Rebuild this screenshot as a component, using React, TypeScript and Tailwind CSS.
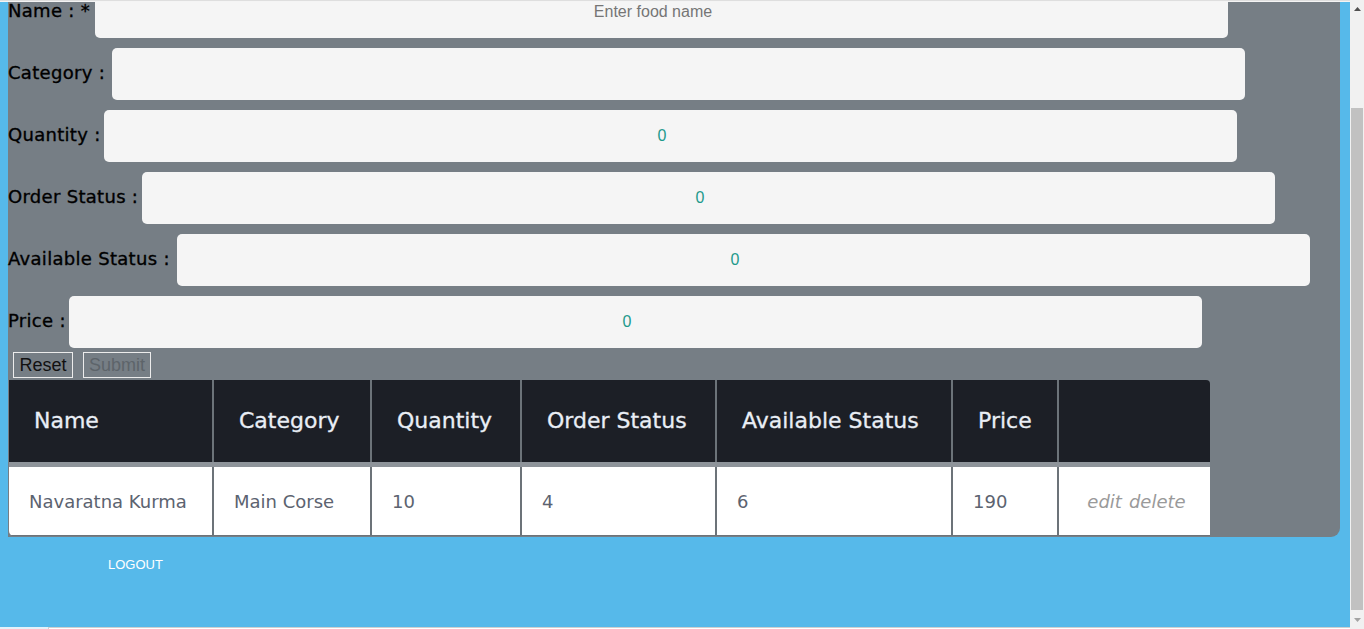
import React from "react";

const poppins = { fontFamily: '"DejaVu Sans", "Noto Sans", sans-serif' };

function FieldRow({ label, labelClass, placeholder, value }: { label: string; labelClass: string; placeholder?: string; value?: string }) {
  return (
    <div className="flex items-center">
      <span className={`${labelClass} shrink-0 text-[18px] leading-none text-black whitespace-nowrap -mt-[2px] tracking-[0.3px] [-webkit-text-stroke:0.35px_black]`} style={poppins}>
        {label}
      </span>
      <input
        readOnly
        placeholder={placeholder}
        value={value ?? ""}
        className="h-[52px] w-[1133px] shrink-0 rounded-[5px] bg-[#f5f5f5] pr-[17px] text-center text-[16px] text-[#1e9a8c] placeholder:text-[#757575] outline-none font-['Liberation_Sans',Arial,sans-serif]"
      />
    </div>
  );
}

const headers = ["Name", "Category", "Quantity", "Order Status", "Available Status", "Price", ""];
const cells = ["Navaratna Kurma", "Main Corse", "10", "4", "6", "190"];

export default function App() {
  return (
    <div className="flex h-[629px] w-[1364px] overflow-hidden bg-[#56b9ea]">
      <div className="flex min-w-0 flex-1 flex-col">
        <div className="h-[2px] shrink-0 border-t border-[#dedede] bg-[#f4f4f4]" />
        <div className="flex min-h-0 flex-1 flex-col overflow-hidden">
          <div className="-mt-[16px] ml-[8px] w-[1332px] shrink-0 rounded-br-[9px] bg-[#767e85] pb-[1px]">
            <div className="flex flex-col gap-[10px]">
              <FieldRow label="Name : *" labelClass="w-[87px]" placeholder="Enter food name" />
              <FieldRow label="Category :" labelClass="w-[104px]" />
              <FieldRow label="Quantity :" labelClass="w-[96px]" value="0" />
              <FieldRow label="Order Status :" labelClass="w-[134px]" value="0" />
              <FieldRow label="Available Status :" labelClass="w-[169px]" value="0" />
              <FieldRow label="Price :" labelClass="w-[61px]" value="0" />
            </div>
            <div className="mt-[4px] flex gap-[10px] pl-[5px] font-['Liberation_Sans',Arial,sans-serif]">
              <button className="h-[26px] w-[60px] border border-[#ececec] text-[18px] leading-none text-[#111]">Reset</button>
              <button disabled className="h-[26px] w-[68px] border border-[#ececec] text-[18px] leading-none text-[#5d646a]">Submit</button>
            </div>
            <div
              className="ml-[1px] mt-[2px] grid w-[1201px] grid-cols-[203px_156px_148px_193px_234px_104px_151px] grid-rows-[82px_5px_68px_1px] gap-x-[2px] overflow-hidden rounded-tr-[4px] rounded-bl-[5px] bg-[#6c7379]"
              style={poppins}
            >
              {headers.map((h, i) => (
                <div key={"h" + i} className="flex items-center bg-[#1c1f26] pb-[2px] pl-[25px] text-[22px] text-[#e9eef5] [-webkit-text-stroke:0.3px_#e9eef5]">
                  {h}
                </div>
              ))}
              <div className="col-span-7 bg-[#8e949a]" />
              {cells.map((c, i) => (
                <div key={"c" + i} className="flex items-center bg-white pl-[20px] text-[18px] text-[#5c6370]">
                  {c}
                </div>
              ))}
              <div className="flex items-center justify-center gap-[1px] bg-white pl-[4px] text-[18px] italic text-[#9a9a9a]">
                <span>edit</span>
                <span className="ml-[6px]">delete</span>
              </div>
              <div className="col-span-7 bg-[#6c7379]" />
            </div>
          </div>
          <div className="pl-[108px] pt-[18px] text-[13px] text-white font-['Liberation_Sans',Arial,sans-serif]">LOGOUT</div>
        </div>
        <div className="flex h-[2px] shrink-0">
          <div className="w-[48px] bg-[#e4f2fa]" />
          <div className="flex-1 border-l border-t border-[#cfcfcf] bg-white" />
        </div>
      </div>
      <div className="flex w-[14px] shrink-0 flex-col bg-[#f1f1f1]">
        <div className="flex h-[17px] items-center justify-center">
          <svg width="7" height="4" viewBox="0 0 7 4"><path d="M0 4 L3.5 0 L7 4 Z" fill="#505050" /></svg>
        </div>
        <div className="ml-[1px] mt-[91px] h-[502px] w-[12px] bg-[#c1c1c1]" />
        <div className="flex flex-1 items-center justify-center">
          <svg width="7" height="4" viewBox="0 0 7 4"><path d="M0 0 L3.5 4 L7 0 Z" fill="#a3a3a3" /></svg>
        </div>
      </div>
    </div>
  );
}
